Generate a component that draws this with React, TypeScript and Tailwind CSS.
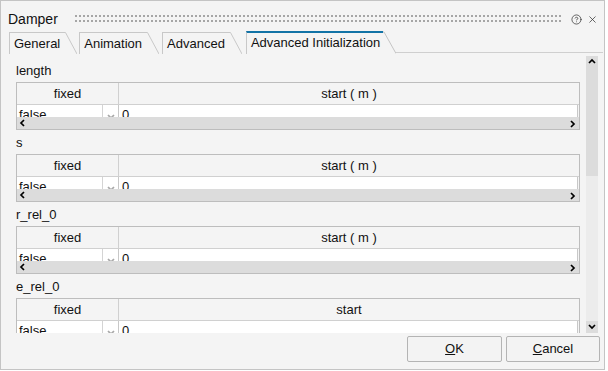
import { CircleHelp, X } from "lucide-react";

const SECTIONS = [
  { name: "length", unit: "start ( m )" },
  { name: "s", unit: "start ( m )" },
  { name: "r_rel_0", unit: "start ( m )" },
  { name: "e_rel_0", unit: "start" },
];

function Chevron({ dir, className }: { dir: "up" | "down" | "left" | "right"; className?: string }) {
  const d = {
    up: "M1 5 L4 2 L7 5",
    down: "M1 2 L4 5 L7 2",
    left: "M5 1 L2 4 L5 7",
    right: "M2 1 L5 4 L2 7",
  }[dir];
  return (
    <svg width="8" height="8" viewBox="0 0 8 8" className={className}>
      <path d={d} fill="none" stroke="currentColor" strokeWidth="1.7" />
    </svg>
  );
}

function Tab({ label, active }: { label: string; active?: boolean }) {
  if (active) {
    return (
      <div className="flex h-[23px] items-stretch">
        <div className="border-l border-t-2 border-l-[#c8c8c8] border-t-[#1273a6] pl-[4px] pr-[3px] text-[13px] leading-[20px]">
          {label}
        </div>
        <svg width="13" height="23" className="shrink-0">
          <path d="M0 1 L1 1 L13 22.5" fill="none" stroke="#c4c4c4" strokeWidth="1" />
        </svg>
      </div>
    );
  }
  return (
    <div className="flex h-[22px] items-stretch">
      <div className="border-l border-t border-[#c8c8c8] pl-[4px] pr-[5px] text-[13px] leading-[21px]">
        {label}
      </div>
      <svg width="12" height="22" className="shrink-0">
        <path d="M0 0.5 L0.5 0.5 L12 22" fill="none" stroke="#c8c8c8" strokeWidth="1" />
      </svg>
    </div>
  );
}

function InitTable({ unit }: { unit: string }) {
  return (
    <div className="w-[564px] h-[48px] border border-[#bdbdbd] flex flex-col">
      {/* header */}
      <div className="flex h-[22px] border-b border-[#d0d0d0] text-[13px] leading-[21px]">
        <div className="w-[102px] border-r border-[#d0d0d0] text-center">fixed</div>
        <div className="flex-1 text-center">{unit}</div>
      </div>
      {/* value row, clipped by the scroll bar */}
      <div className="flex h-[12px] overflow-hidden text-[13px] leading-[20px]">
        <div className="w-[86px] bg-white border-r border-[#d4d4d4] pl-[2px]">false</div>
        <div className="w-[15px] bg-white flex justify-center">
          <Chevron dir="down" className="mt-[8px] text-[#a8a8a8]" />
        </div>
        <div className="flex-1 bg-white border-l border-r border-[#c8c8c8] pl-[3px] mr-[1px]">0</div>
      </div>
      {/* horizontal scroll bar */}
      <div className="flex h-[12px] items-center justify-between bg-[#dcdcdc] px-[2px] text-black">
        <Chevron dir="left" />
        <Chevron dir="right" className="mt-[2px]" />
      </div>
    </div>
  );
}

export default function App() {
  return (
    <div className="w-[608px] h-[371px] bg-white">
      <div className="w-[605px] h-[370px] border border-[#c4c4c4] bg-[#f4f4f4] flex flex-col font-['Liberation_Sans',Arial,sans-serif] text-[#111]">
        {/* Title bar */}
        <div className="flex h-[30px] items-center pt-[6px] pl-[7px] pr-[6px]">
          <span className="text-[14px] leading-[18px]">Damper</span>
          <svg className="ml-[17px] h-[8px] w-[489px]" height="8">
            <defs>
              <pattern id="grip" width="4" height="5" patternUnits="userSpaceOnUse">
                <rect x="0" y="0" width="2" height="2" fill="#a6a6a6" />
              </pattern>
            </defs>
            <rect x="0" y="0" width="489" height="7" fill="url(#grip)" />
          </svg>
          <CircleHelp size={11} strokeWidth={1.6} className="ml-[8px] text-[#333]" />
          <X size={11} strokeWidth={1.6} className="ml-[5px] text-[#333]" />
        </div>

        {/* Tabs */}
        <div className="flex h-[23px] items-end pl-[8px] pr-[1px]">
          <Tab label="General" />
          <div className="ml-[2px]"><Tab label="Animation" /></div>
          <div className="ml-[3px]"><Tab label="Advanced" /></div>
          <div className="ml-[4px]"><Tab label="Advanced Initialization" active /></div>
          <div className="flex-1 h-[1px] mb-[1px] bg-[#cfcfcf]" />
        </div>

        {/* Content */}
        <div className="flex h-[279px]">
          <div className="w-[584px] overflow-hidden pl-[15px] pt-[9px]">
            {SECTIONS.map((s) => (
              <div key={s.name} className="mb-[5px]">
                <div className="h-[15px] text-[13px] leading-[15px]">{s.name}</div>
                <div className="mt-[4px]">
                  <InitTable unit={s.unit} />
                </div>
              </div>
            ))}
          </div>
          <div className="ml-[1px] mt-[2px] flex h-[277px] w-[12px] flex-col">
            <div className="flex h-[12px] items-center justify-center bg-[#dcdcdc] text-black">
              <Chevron dir="up" />
            </div>
            <div className="h-[108px] bg-[#dcdcdc]" />
            <div className="flex-1 bg-[#ececec]" />
            <div className="flex h-[12px] items-center justify-center bg-[#dcdcdc] text-black">
              <Chevron dir="down" />
            </div>
          </div>
        </div>

        {/* Footer */}
        <div className="flex flex-1 justify-end gap-[4px] pt-[3px] pr-[4px]">
          <button className="h-[26px] w-[95px] rounded-[2px] border border-[#b4b4b4] bg-[#f3f3f3] text-[13px]">
            <span className="underline">O</span>K
          </button>
          <button className="h-[26px] w-[94px] rounded-[2px] border border-[#b4b4b4] bg-[#f3f3f3] text-[13px]">
            <span className="underline">C</span>ancel
          </button>
        </div>
      </div>
    </div>
  );
}
